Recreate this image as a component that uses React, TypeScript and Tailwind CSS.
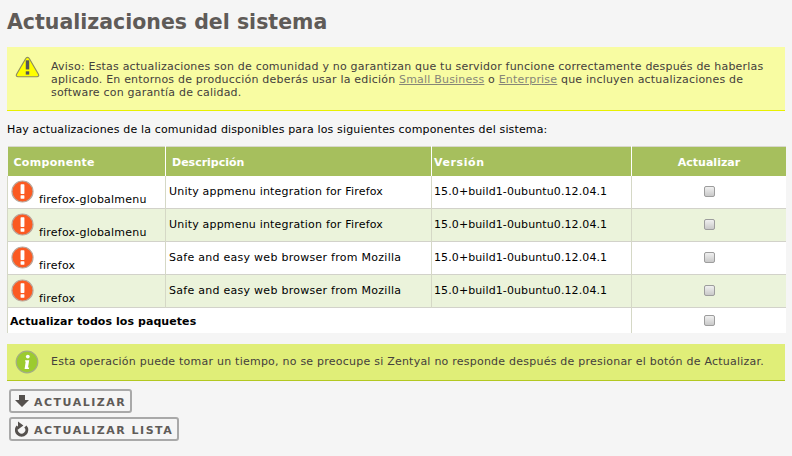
const font = { fontFamily: '"DejaVu Sans", sans-serif' };

function ErrorIcon() {
  return (
    <svg width="23" height="23" viewBox="0 0 24 24" className="shrink-0">
      <circle cx="12" cy="12" r="11" fill="#fb5a22" stroke="#b9a79c" strokeWidth="1.2" />
      <rect x="10" y="4.5" width="4" height="10" rx="0.6" fill="#fff" />
      <rect x="10" y="16" width="4" height="3.6" rx="0.5" fill="#fff" />
    </svg>
  );
}

function WarnIcon() {
  return (
    <svg width="25" height="23" viewBox="0 0 26 24" className="shrink-0">
      <path d="M13 1.5c-1 0-1.6.6-2 1.4L1.6 19c-.8 1.4 0 2.6 1.5 2.6h19.8c1.5 0 2.3-1.2 1.5-2.6L15 2.9c-.4-.8-1-1.4-2-1.4z" fill="#ffff00" stroke="#8c8c5e" strokeWidth="1.2" />
      <rect x="11.2" y="4.5" width="3.6" height="9.5" fill="#55555a" />
      <rect x="11.2" y="16" width="3.6" height="3.4" fill="#55555a" />
    </svg>
  );
}

function InfoIcon() {
  return (
    <svg width="24" height="24" viewBox="0 0 24 24" className="shrink-0">
      <circle cx="12" cy="12" r="10.8" fill="#9ccb2f" stroke="#a3ae83" strokeWidth="1.2" />
      <circle cx="12.8" cy="6.6" r="1.9" fill="#fff" />
      <path d="M10.2 10.2h4l-1.2 7.4h1.2l-.3 1.4H9.6l1.1-7.4H9.9z" fill="#fff" />
    </svg>
  );
}

function Check() {
  return (
    <span className="inline-block w-[11px] h-[11px] rounded-[2px] border border-[#9d9d9d] bg-gradient-to-b from-[#f0f0f0] to-[#c9c9c9] align-middle" />
  );
}

const rows = [
  { name: 'firefox-globalmenu', desc: 'Unity appmenu integration for Firefox', alt: false },
  { name: 'firefox-globalmenu', desc: 'Unity appmenu integration for Firefox', alt: true },
  { name: 'firefox', desc: 'Safe and easy web browser from Mozilla', alt: false },
  { name: 'firefox', desc: 'Safe and easy web browser from Mozilla', alt: true },
];

export default function App() {
  return (
    <div className="w-[792px] h-[456px] overflow-hidden bg-[#f5f5f5] px-[7px] pt-[7px] text-[11px] text-black" style={font}>
      <h1 className="text-[20.5px] leading-[30px] font-bold text-[#5f5b58] h-[33px]">Actualizaciones del sistema</h1>

      <div className="mt-[7px] w-[778px] h-[64px] bg-[#f8fca2] border-b border-[#e8f000] flex items-start pl-[8px] pt-[9px] text-[#44403c]">
        <WarnIcon />
        <p className="ml-[11px] pt-[4px] leading-[13px] w-[718px] tracking-[0.2px]">
          Aviso: Estas actualizaciones son de comunidad y no garantizan que tu servidor funcione correctamente después de haberlas aplicado. En entornos de producción deberás usar la edición <a className="underline text-[#868678]">Small Business</a> o <a className="underline text-[#868678]">Enterprise</a> que incluyen actualizaciones de software con garantía de calidad.
        </p>
      </div>

      <p className="mt-[12px] leading-[13px] tracking-[0.15px]">Hay actualizaciones de la comunidad disponibles para los siguientes componentes del sistema:</p>

      <table className="mt-[10px] w-[779px] table-fixed border-collapse">
        <colgroup>
          <col className="w-[158px]" />
          <col className="w-[266px]" />
          <col className="w-[200px]" />
          <col />
        </colgroup>
        <thead>
          <tr className="h-[29px] bg-[#a6bf5d] text-white font-bold text-[11px] border-t border-[#d8d8cc]">
            <th className="text-left pl-[6px] pt-[3px] border-r border-white tracking-[0.3px]">Componente</th>
            <th className="text-left pl-[6px] pt-[3px] border-r border-white">Descripción</th>
            <th className="text-left pl-[2px] pt-[3px] border-r border-white tracking-[0.6px]">Versión</th>
            <th className="text-center pt-[3px]">Actualizar</th>
          </tr>
        </thead>
        <tbody>
          {rows.map((r, i) => (
            <tr key={i} className={`h-[33px] border-b border-[#d2d2ca] ${r.alt ? 'bg-[#ebf3db]' : 'bg-white'}`}>
              <td className="border-l border-r border-[#d5d8c6] pl-[3px] p-0">
                <div className="flex h-[32px] pt-[4px]">
                  <ErrorIcon />
                  <span className="ml-[5px] mt-[13px] leading-[13px] tracking-[0.22px]">{r.name}</span>
                </div>
              </td>
              <td className={`border-r border-[#d5d8c6] pl-[3px] p-0 ${i < 2 ? 'tracking-[0.19px]' : 'tracking-[0.27px]'}`}>{r.desc}</td>
              <td className="border-r border-[#d5d8c6] pl-[2px] p-0 tracking-[0.1px]">15.0+build1-0ubuntu0.12.04.1</td>
              <td className="text-center p-0"><Check /></td>
            </tr>
          ))}
          <tr className="h-[25px] bg-white">
            <td colSpan={3} className="border-l border-r border-[#d5d8c6] pl-[2px] pt-[3px] pb-0 font-bold tracking-[0.07px]">Actualizar todos los paquetes</td>
            <td className="text-center p-0"><Check /></td>
          </tr>
        </tbody>
      </table>

      <div className="mt-[11px] w-[778px] h-[37px] bg-[#e0ee78] border-b border-[#b3c820] flex items-center pl-[8px] text-[#44403c]">
        <InfoIcon />
        <p className="ml-[12px] pt-[1px] tracking-[0.23px]">Esta operación puede tomar un tiempo, no se preocupe si Zentyal no responde después de presionar el botón de Actualizar.</p>
      </div>

      <div className="mt-[8px] flex flex-col items-start gap-[4px] ml-[2px]">
        <button className="h-[24px] px-[4px] flex items-center gap-[5px] bg-[#f5f5f5] border-2 border-[#a9a9a9] rounded-[3px] text-[#5f5b58] font-bold text-[11px] tracking-[1.5px]">
          <svg width="14" height="14" viewBox="0 0 14 14"><path d="M4 1h6v5h4l-7 7-7-7h4z" fill="#55514e" /></svg>
          <span className="mt-[6px]">ACTUALIZAR</span>
        </button>
        <button className="h-[24px] px-[4px] flex items-center gap-[5px] bg-[#f5f5f5] border-2 border-[#a9a9a9] rounded-[3px] text-[#5f5b58] font-bold text-[11px] tracking-[1.5px]">
          <svg width="14" height="16" viewBox="0 0 14 16">
            <path d="M10.4 5.4a5.2 5.2 0 1 1-7.6 0" fill="none" stroke="#55514e" strokeWidth="3" />
            <path d="M3 0.6l5.4 4-5.4 4z" fill="#55514e" />
          </svg>
          <span className="mt-[6px]">ACTUALIZAR LISTA</span>
        </button>
      </div>
    </div>
  );
}
